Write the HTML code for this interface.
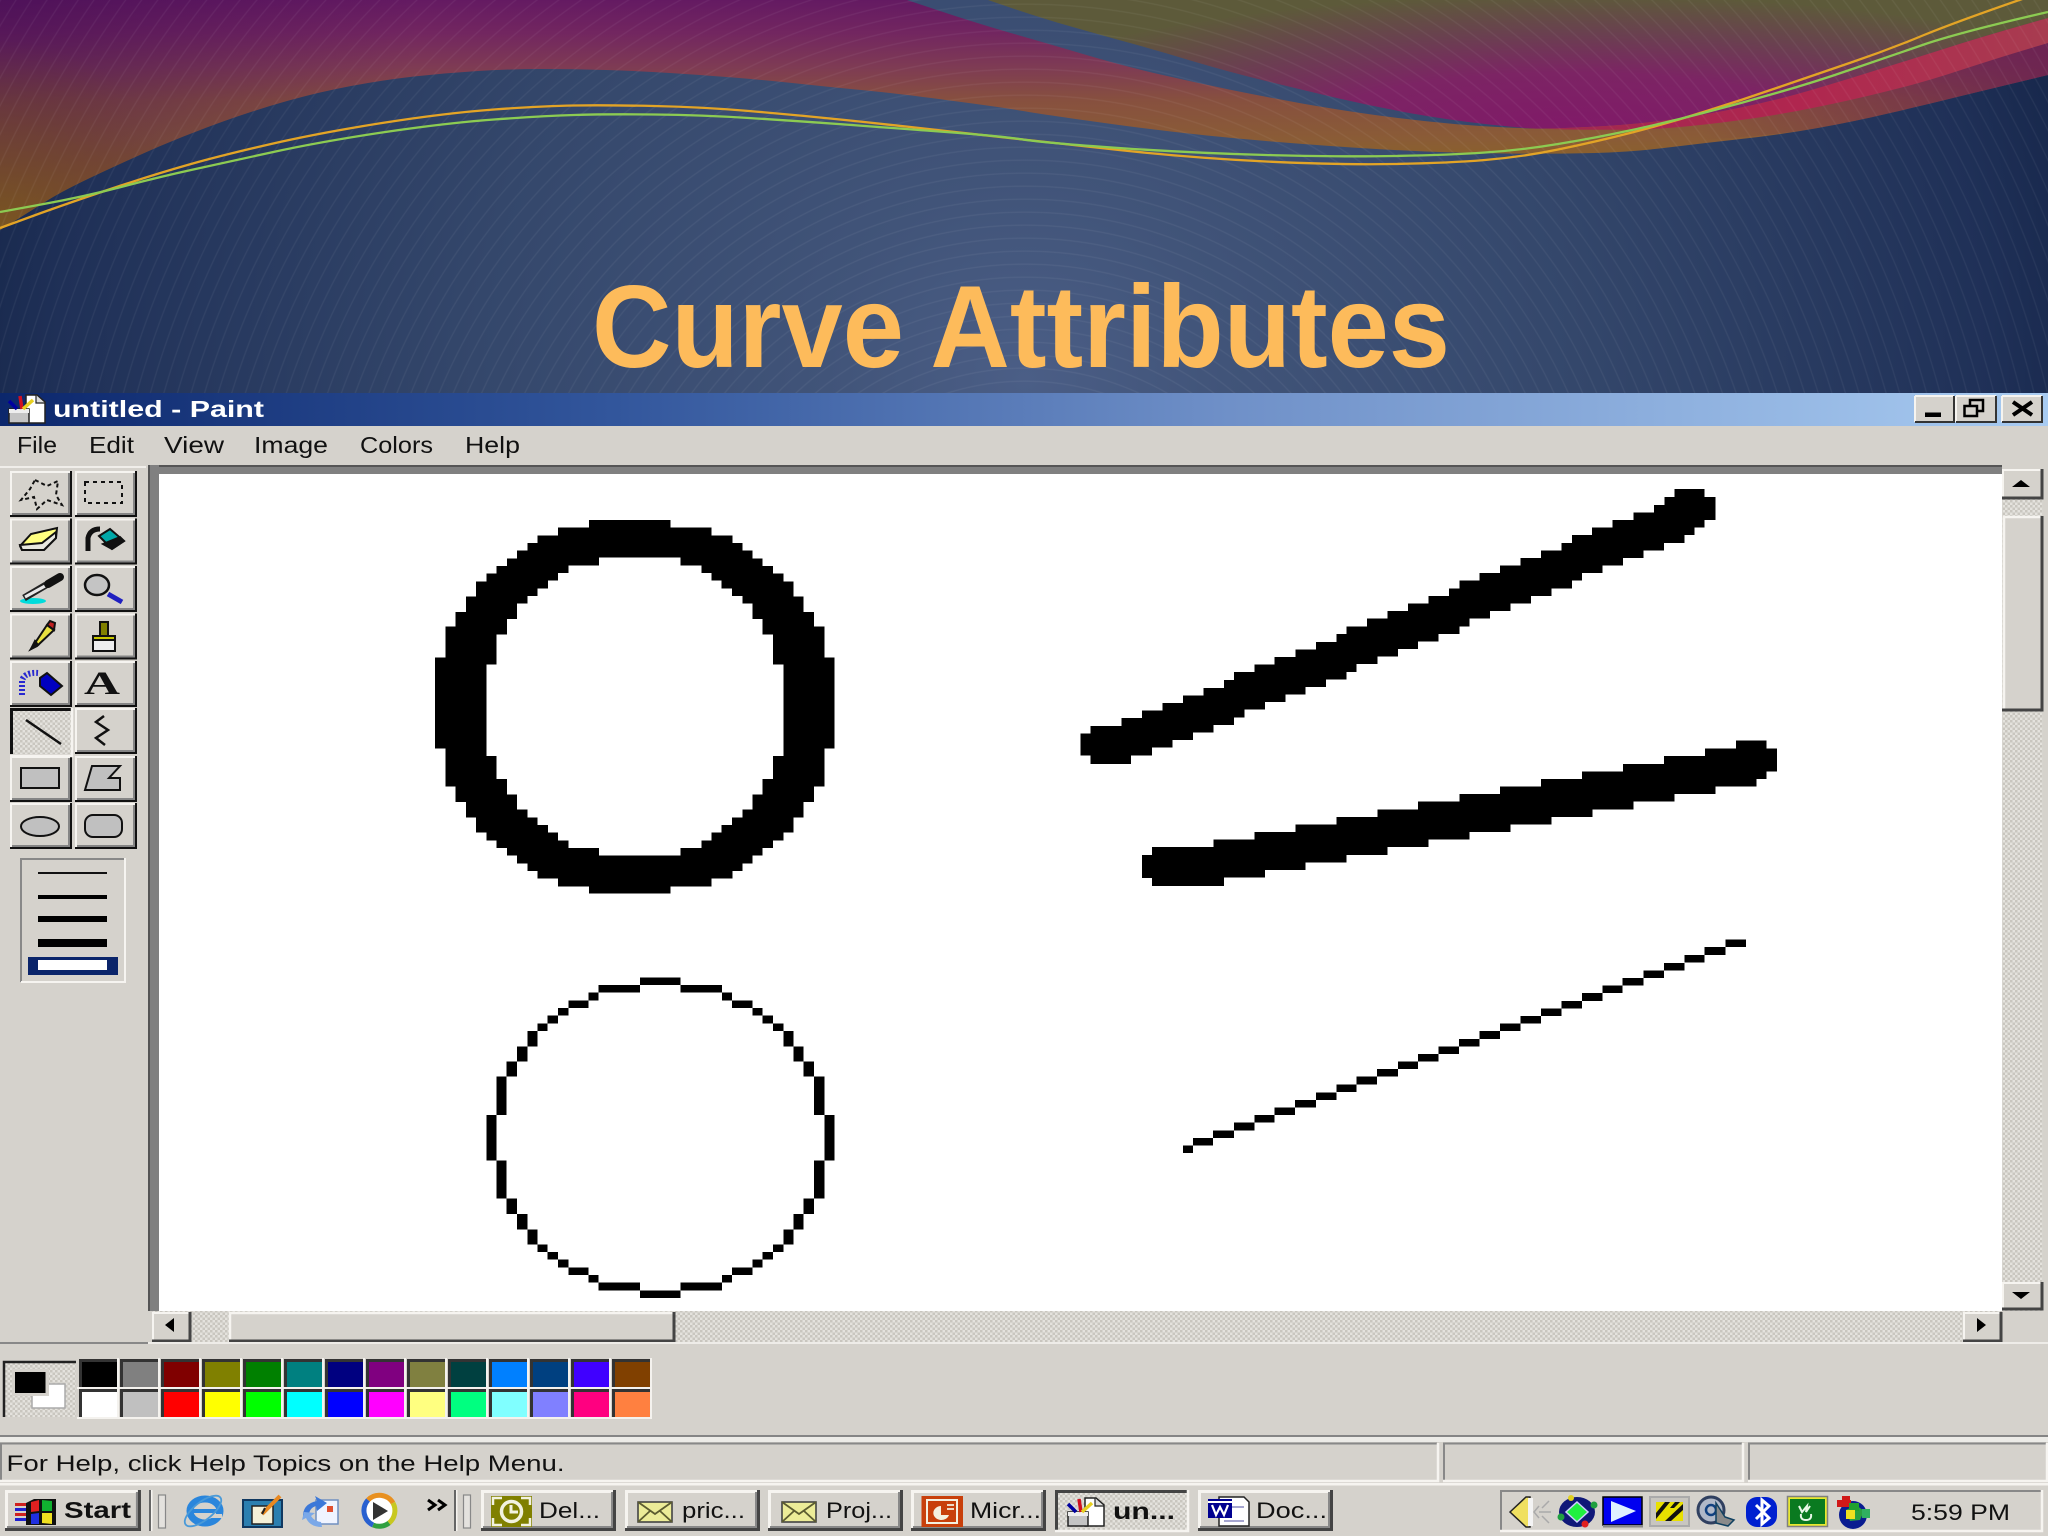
<!DOCTYPE html>
<html lang="en">
<head>
<meta charset="utf-8">
<title>Curve Attributes</title>
<style>
html,body{margin:0;padding:0;background:#d5d2cc;width:2048px;height:1536px;overflow:hidden}
svg{display:block;position:absolute;left:0;top:0}
text{font-family:"Liberation Sans",sans-serif;fill:#111}
.m{font-size:23px}
.t{font-size:22px}
</style>
</head>
<body>
<svg width="2048" height="1536" viewBox="0 0 2048 1536" xmlns="http://www.w3.org/2000/svg">
<defs>
<radialGradient id="bg" gradientUnits="userSpaceOnUse" cx="1025" cy="380" r="1100">
<stop offset="0" stop-color="#4b5e86"/><stop offset=".18" stop-color="#415479"/><stop offset=".5" stop-color="#34476b"/><stop offset=".88" stop-color="#1f3057"/><stop offset="1" stop-color="#152548"/>
</radialGradient>
<radialGradient id="arcs" gradientUnits="userSpaceOnUse" cx="1025" cy="640" r="13" spreadMethod="repeat">
<stop offset="0" stop-color="#fff" stop-opacity="0"/><stop offset=".82" stop-color="#fff" stop-opacity="0"/><stop offset=".91" stop-color="#fff" stop-opacity=".06"/><stop offset="1" stop-color="#fff" stop-opacity="0"/>
</radialGradient>
<linearGradient id="band" gradientUnits="userSpaceOnUse" x1="0" y1="0" x2="0" y2="200">
<stop offset="0" stop-color="#641a62"/><stop offset=".165" stop-color="#722660"/><stop offset=".335" stop-color="#7e3b54"/><stop offset=".5" stop-color="#87503f"/><stop offset=".7" stop-color="#8a5c36"/><stop offset="1" stop-color="#8a6c14"/>
</linearGradient>
<radialGradient id="tl" gradientUnits="userSpaceOnUse" cx="0" cy="0" r="420">
<stop offset="0" stop-color="#3c0a52" stop-opacity=".55"/><stop offset="1" stop-color="#3c0a52" stop-opacity="0"/>
</radialGradient>
<radialGradient id="gold" gradientUnits="userSpaceOnUse" cx="0" cy="230" r="190">
<stop offset="0" stop-color="#8f7010" stop-opacity="1"/><stop offset=".55" stop-color="#8a5f22" stop-opacity=".75"/><stop offset="1" stop-color="#85502f" stop-opacity="0"/>
</radialGradient>
<linearGradient id="bandr" gradientUnits="userSpaceOnUse" x1="1700" y1="0" x2="2048" y2="0">
<stop offset="0" stop-color="#6a2450" stop-opacity="0"/><stop offset="1" stop-color="#6a2050" stop-opacity=".8"/>
</linearGradient>
<radialGradient id="tr" gradientUnits="userSpaceOnUse" cx="0" cy="0" r="1" gradientTransform="translate(1570,125) scale(620,130)">
<stop offset="0" stop-color="#801a68"/><stop offset=".4" stop-color="#7c2464"/><stop offset=".7" stop-color="#6a4050"/><stop offset="1" stop-color="#5d5a3a"/>
</radialGradient>
<linearGradient id="red" gradientUnits="userSpaceOnUse" x1="1544" y1="0" x2="2048" y2="0">
<stop offset="0" stop-color="#a02850"/><stop offset=".5" stop-color="#b0264f"/><stop offset="1" stop-color="#a83c50"/>
</linearGradient>
<linearGradient id="title" x1="0" y1="0" x2="1" y2="0">
<stop offset="0" stop-color="#0c276c"/><stop offset=".3" stop-color="#32569c"/><stop offset=".6" stop-color="#6f90c8"/><stop offset="1" stop-color="#a8cbf1"/>
</linearGradient>
<pattern id="dith" width="5" height="5" patternUnits="userSpaceOnUse">
<rect width="5" height="5" fill="#e4e2dd"/><rect width="2.5" height="2.5" fill="#c9c6bf"/><rect x="2.5" y="2.5" width="2.5" height="2.5" fill="#c9c6bf"/>
</pattern>
<g id="tb">
<rect width="62" height="46" fill="#d5d2cc"/>
<rect width="62" height="2" fill="#f6f4f0"/><rect width="2" height="46" fill="#f6f4f0"/>
<rect x="58" y="2" width="2" height="42" fill="#858585"/><rect x="2" y="42" width="58" height="2" fill="#858585"/>
<rect x="60" width="2" height="46" fill="#111"/><rect y="44" width="62" height="2" fill="#111"/>
</g>
<g id="bb">
<rect width="135" height="41" fill="#d5d2cc"/>
<rect width="135" height="3" fill="#f6f4f0"/><rect width="3" height="41" fill="#f6f4f0"/>
<rect x="130" y="2" width="2" height="37" fill="#888"/><rect x="2" y="36" width="130" height="2" fill="#888"/>
<rect x="132" width="3" height="41" fill="#444"/><rect y="38" width="135" height="3" fill="#444"/>
</g>
<g id="sw">
<rect width="37" height="27"/>
<rect x="-1" y="-1" width="39" height="3" fill="#333"/><rect x="-1" y="-1" width="3" height="29" fill="#333"/>
<rect x="-3" y="27" width="42" height="2" fill="#f4f2ee"/><rect x="37" y="-2" width="2" height="31" fill="#f4f2ee"/>
</g>
<g id="paint">
<path d="M20 1h11l8 7v21H20z" fill="#fff" stroke="#222" stroke-width="1.5"/>
<path d="M30 1v8h9" fill="#ddd" stroke="#222" stroke-width="1.2"/>
<rect x="3" y="15" width="20" height="14" fill="#c4c4c4" stroke="#222" stroke-width="1.5"/>
<rect x="3" y="15" width="20" height="4" fill="#eee"/>
<path d="M3 7l8 8" stroke="#0000a0" stroke-width="3.5"/>
<path d="M14 2l2 13" stroke="#d01020" stroke-width="3.5"/>
<path d="M27 6L17 15" stroke="#e8d020" stroke-width="3.5"/>
</g>
<g id="env">
<rect x="1" y="1" width="34" height="20" fill="#ecec98" stroke="#444" stroke-width="1.6"/>
<path d="M1 1l17 12L35 1M1 21l12-11M35 21L23 10" fill="none" stroke="#5c5c30" stroke-width="1.8"/>
</g>
</defs>

<!-- slide background -->
<rect width="2048" height="395" fill="url(#bg)"/>
<path d="M0 230L16 220Q32 210 48 200Q64 190 96 175Q128 160 159 146.5Q191 133 223 121.5Q255 110 287 101Q319 92 351 86Q383 80 414 76.5Q446 73 478 71Q510 69 542 69Q574 69 606 70Q638 71 670 73Q702 75 733 77.5Q765 80 797 83.5Q829 87 861 90Q893 93 946 100Q1000 107 1023 111Q1046 115 1119 125Q1193 135 1266 141Q1339 147 1394 150Q1449 153 1504 153.5Q1559 154 1595 153Q1632 152 1668 147.5Q1705 143 1741 139Q1778 135 1815 128.5Q1852 122 1888 113.5Q1925 105 1961 96Q1998 87 2048 75V0H0Z" fill="url(#band)"/>
<path d="M0 230L16 220Q32 210 48 200Q64 190 96 175Q128 160 159 146.5Q191 133 223 121.5Q255 110 287 101Q319 92 351 86Q383 80 414 76.5V0H0Z" fill="url(#gold)"/>
<path d="M0 230L16 220Q32 210 48 200Q64 190 96 175Q128 160 159 146.5Q191 133 223 121.5Q255 110 287 101Q319 92 351 86Q383 80 414 76.5V0H0Z" fill="url(#tl)"/>
<path d="M1700 140Q1778 135 1815 128.5Q1852 122 1888 113.5Q1925 105 1961 96Q1998 87 2048 75V0H1700Z" fill="url(#bandr)"/>
<path d="M907 0L940 11Q973 22 1009 32.5Q1046 43 1083 54Q1120 65 1156 73.5Q1193 82 1229 89.5Q1266 97 1302 103.5Q1339 110 1375 115Q1412 120 1449 123.5Q1486 127 1533 128.5V0Z" fill="url(#bg)"/>
<path d="M988 0L1010 7.5Q1032 15 1057 22.5Q1083 30 1119 40Q1156 50 1192 61Q1229 72 1266 81Q1303 90 1339 98.5Q1376 107 1412 113.5Q1449 120 1485 124Q1522 128 1533 128.5Q1544 129 1588 127Q1632 125 1668 120Q1705 115 1741 107.5Q1778 100 1815 89Q1852 78 1888 66.5Q1925 55 1961 43.5Q1998 32 2048 18V0H988Z" fill="url(#tr)"/>
<path d="M1544 129L1588 127Q1632 125 1668 120Q1705 115 1741 107.5Q1778 100 1815 89Q1852 78 1888 66.5Q1925 55 1961 43.5Q1998 32 2048 18V43L2023 50.5Q1998 58 1961 70Q1925 82 1888 91Q1852 100 1815 107.5Q1778 115 1741 120Q1705 125 1668 128Q1632 131 1544 129Z" fill="url(#red)"/>
<rect width="2048" height="395" fill="url(#arcs)"/>
<g fill="none" stroke-width="2.3">
<path d="M0 228L41 213Q83 198 121 185.5Q159 173 191 164Q223 155 271 144Q319 133 382 123Q446 113 494 109.5Q542 106 574 105.5Q606 105 654 106Q702 107 749 111Q797 115 845 120Q893 125 946 131Q1000 137 1023 139.5Q1046 142 1119 150Q1193 158 1266 161.5Q1339 165 1394 164Q1449 163 1485 160Q1522 157 1558 149.5Q1595 142 1632 132.5Q1669 123 1705 111.5Q1742 100 1778 87.5Q1815 75 1851 62.5Q1888 50 1924 35Q1961 20 2031 -4" stroke="#e3a426"/>
<path d="M0 212L41 204.5Q83 197 121 187Q159 177 191 170Q223 163 271 152.5Q319 142 382 132.5Q446 123 494 119.500Q542 116 574 115Q606 114 654 114.500Q702 115 749 118Q797 121 845 124.500Q893 128 946 132Q1000 136 1023 139.500Q1046 143 1119 148Q1193 153 1266 155Q1339 157 1394 156Q1449 155 1485 152.500Q1522 150 1558 144Q1595 138 1632 130Q1669 122 1705 112.500Q1742 103 1778 92.500Q1815 82 1851 69.500Q1888 57 1924 44.500Q1961 32 2048 12" stroke="#8ccb52"/>
</g>
<text x="592" y="367" font-size="117" font-weight="700" textLength="858" lengthAdjust="spacingAndGlyphs" style="fill:#fdbb5b">Curve Attributes</text>

<!-- window -->
<rect y="393" width="2048" height="1143" fill="#d5d2cc"/>
<rect y="393" width="2048" height="33" fill="url(#title)"/>
<use href="#paint" transform="translate(6,394)"/>
<text x="53" y="417" font-size="23" font-weight="700" textLength="211" lengthAdjust="spacingAndGlyphs" style="fill:#fff">untitled - Paint</text>

<!-- caption buttons -->
<g>
<rect x="1915" y="396" width="39" height="26" fill="#d5d2cc"/><path d="M1915 396h39M1915 396v26" stroke="#f6f4f0" stroke-width="2" fill="none"/><path d="M1954 396v26H1915" stroke="#333" stroke-width="2" fill="none"/>
<rect x="1925" y="412.500" width="16" height="4.500" fill="#000"/>
<rect x="1956" y="396" width="40" height="26" fill="#d5d2cc"/><path d="M1956 396h40M1956 396v26" stroke="#f6f4f0" stroke-width="2" fill="none"/><path d="M1996 396v26H1956" stroke="#333" stroke-width="2" fill="none"/>
<path d="M1970 405v-5h13v11h-6" fill="none" stroke="#000" stroke-width="2.500"/><rect x="1964.500" y="406" width="12.500" height="10" fill="#d5d2cc" stroke="#000" stroke-width="2.500"/>
<rect x="2002" y="396" width="40" height="26" fill="#d5d2cc"/><path d="M2002 396h40M2002 396v26" stroke="#f6f4f0" stroke-width="2" fill="none"/><path d="M2042 396v26H2002" stroke="#333" stroke-width="2" fill="none"/>
<path d="M2013 402l19 13M2032 402l-19 13" stroke="#000" stroke-width="4"/>
</g>

<!-- menu -->
<text class="m" x="17" y="453" textLength="40" lengthAdjust="spacingAndGlyphs">File</text>
<text class="m" x="89" y="453" textLength="45" lengthAdjust="spacingAndGlyphs">Edit</text>
<text class="m" x="164" y="453" textLength="60" lengthAdjust="spacingAndGlyphs">View</text>
<text class="m" x="254" y="453" textLength="74" lengthAdjust="spacingAndGlyphs">Image</text>
<text class="m" x="360" y="453" textLength="73" lengthAdjust="spacingAndGlyphs">Colors</text>
<text class="m" x="465" y="453" textLength="55" lengthAdjust="spacingAndGlyphs">Help</text>

<!-- canvas -->
<rect x="0" y="466" width="146" height="2" fill="#f0eeea"/>
<rect x="148" y="465" width="1854" height="9" fill="#808080"/>
<rect x="148" y="465" width="1854" height="2" fill="#555"/>
<rect x="148" y="465" width="11" height="846" fill="#808080"/>
<rect x="148" y="465" width="2" height="846" fill="#555"/>
<rect x="159" y="474" width="1843" height="837" fill="#fff"/>

<!-- big circle -->
<g transform="translate(400,480) scale(.33333)" shape-rendering="crispEdges">
<path fill="#000" d="M567 120H812V143H567ZM474 143H935V166H474ZM413 166H997V189H413ZM382 189H1027V212H382ZM351 212H1058V235H351ZM321 235H1088V258H321ZM290 258H1119V281H290ZM259 281H1150V304H259ZM228 304H1181V350H228ZM198 350H1211V396H198ZM167 396H1242V440H167ZM136 440H1273V532H136ZM105 532H1304V806H105ZM136 806H1273V920H136ZM167 920H1242V966H167ZM198 966H1211V1012H198ZM228 1012H1181V1058H228ZM259 1058H1150V1081H259ZM290 1081H1119V1104H290ZM321 1104H1088V1127H321ZM351 1127H1058V1150H351ZM382 1150H1027V1173H382ZM413 1173H997V1196H413ZM474 1196H935V1219H474ZM567 1219H812V1241H567Z"/>
<path fill="#fff" d="M597 233H842V256H597ZM505 256H904V279H505ZM474 279H935V302H474ZM444 302H965V325H444ZM413 325H996V348H413ZM382 348H1027V371H382ZM351 371H1058V417H351ZM321 417H1088V463H321ZM290 463H1119V554H290ZM259 554H1150V828H259ZM290 828H1119V897H290ZM321 897H1088V943H321ZM351 943H1058V989H351ZM382 989H1027V1012H382ZM413 1012H996V1035H413ZM444 1035H965V1058H444ZM474 1058H935V1081H474ZM505 1081H904V1104H505ZM597 1104H842V1127H597Z"/>
</g>

<!-- small circle -->
<g transform="translate(460,960) scale(.33333)" shape-rendering="crispEdges">
<path fill="#000" d="M540 52H662V75H540ZM416 75H540V98H416ZM662 75H786V98H662ZM386 98H416V121H386ZM786 98H816V121H786ZM325 121H386V144H325ZM816 121H878V144H816ZM294 144H325V167H294ZM878 144H908V167H878ZM263 167H294V190H263ZM908 167H939V190H908ZM233 190H263V213H233ZM939 190H970V213H939ZM202 213H233V259H202ZM970 213H1001V259H970ZM171 259H202V305H171ZM1001 259H1031V305H1001ZM140 305H171V350H140ZM1031 305H1062V350H1031ZM110 350H140V465H110ZM1062 350H1093V465H1062ZM79 465H110V601H79ZM1093 465H1124V601H1093ZM110 601H140V716H110ZM1062 601H1093V716H1062ZM140 716H171V762H140ZM1031 716H1062V762H1031ZM171 762H202V808H171ZM1001 762H1031V808H1001ZM202 808H233V853H202ZM970 808H1001V853H970ZM233 853H263V876H233ZM939 853H970V876H939ZM263 876H294V899H263ZM908 876H939V899H908ZM294 899H325V922H294ZM878 899H908V922H878ZM325 922H386V945H325ZM816 922H878V945H816ZM386 945H416V968H386ZM786 945H816V968H786ZM416 968H540V991H416ZM662 968H786V991H662ZM540 991H662V1014H540Z"/>
</g>

<!-- lines -->
<g transform="translate(1060,470) scale(.48469,.44643)" shape-rendering="crispEdges" fill="#000">
<polygon points="42,590 63,590 63,573 127,573 127,556 169,556 169,539 211,539 211,522 254,522 254,505 296,505 296,488 338,488 338,470 359,470 359,453 401,453 401,436 443,436 443,419 486,419 486,402 528,402 528,385 570,385 570,367 591,367 591,350 633,350 633,333 676,333 676,316 718,316 718,299 760,299 760,282 803,282 803,265 824,265 824,248 866,248 866,231 908,231 908,214 950,214 950,197 992,197 992,180 1035,180 1035,163 1056,163 1056,146 1098,146 1098,129 1140,129 1140,112 1183,112 1183,95 1226,95 1226,78 1247,78 1247,60 1268,60 1268,43 1330,43 1330,60 1352,60 1352,112 1330,112 1330,129 1309,129 1309,146 1288,146 1288,163 1246,163 1246,180 1204,180 1204,197 1162,197 1162,214 1119,214 1119,231 1077,231 1077,248 1056,248 1056,265 1014,265 1014,282 972,282 972,299 929,299 929,316 887,316 887,333 845,333 845,350 824,350 824,367 781,367 781,384 739,384 739,401 697,401 697,418 655,418 655,435 612,435 612,452 591,452 591,469 549,469 549,486 507,486 507,503 465,503 465,520 423,520 423,537 381,537 381,554 359,554 359,571 317,571 317,588 274,588 274,605 232,605 232,622 190,622 190,639 147,639 147,658 63,658 63,640 42,640"/>
<polygon points="169,862 190,862 190,845 317,845 317,828 401,828 401,811 486,811 486,794 570,794 570,777 655,777 655,760 739,760 739,743 824,743 824,726 908,726 908,709 992,709 992,692 1077,692 1077,675 1162,675 1162,658 1246,658 1246,641 1331,641 1331,624 1395,624 1395,606 1458,606 1458,624 1479,624 1479,675 1458,675 1458,692 1437,692 1437,709 1352,709 1352,726 1268,726 1268,743 1183,743 1183,760 1099,760 1099,777 1014,777 1014,794 929,794 929,811 845,811 845,828 760,828 760,845 676,845 676,862 591,862 591,879 507,879 507,896 423,896 423,913 338,913 338,932 190,932 190,914 169,914"/>
<path d="M254 1513h20v17h-20zM274 1496h42v17h-42zM316 1479h43v17h-43zM359 1462h42v17h-42zM401 1445h42v17h-42zM443 1428h42v17h-42zM485 1411h43v17h-43zM528 1394h42v17h-42zM570 1376h42v17h-42zM612 1359h42v17h-42zM654 1342h43v17h-43zM697 1325h42v17h-42zM739 1308h42v17h-42zM781 1291h42v17h-42zM823 1274h43v17h-43zM866 1257h42v17h-42zM908 1240h42v17h-42zM950 1223h42v17h-42zM992 1206h43v17h-43zM1035 1189h42v17h-42zM1077 1172h42v17h-42zM1119 1155h42v17h-42zM1161 1138h43v17h-43zM1204 1121h42v17h-42zM1246 1104h42v17h-42zM1288 1086h42v17h-42zM1330 1069h43v17h-43zM1373 1052h42v17h-42z"/>
</g>

<!-- vertical scrollbar -->
<rect x="2002" y="469" width="41" height="842" fill="url(#dith)"/>
<rect x="2002" y="469" width="41" height="29" fill="#d5d2cc"/>
<path d="M2003 498v-28h39" stroke="#f6f4f0" stroke-width="2" fill="none"/><path d="M2042 469v29h-40" stroke="#444" stroke-width="3" fill="none"/>
<path d="M2012 487l9-7 9 7z" fill="#000"/>
<rect x="2003" y="516" width="40" height="194" fill="#d5d2cc"/>
<path d="M2004 710V517h38" stroke="#f6f4f0" stroke-width="2.500" fill="none"/><path d="M2042 516v194h-40" stroke="#444" stroke-width="3" fill="none"/>
<rect x="2002" y="1282" width="41" height="27" fill="#d5d2cc"/>
<path d="M2003 1309v-26h39" stroke="#f6f4f0" stroke-width="2" fill="none"/><path d="M2042 1282v27h-40" stroke="#444" stroke-width="3" fill="none"/>
<path d="M2012 1292l9 7 9-7z" fill="#000"/>

<!-- horizontal scrollbar -->
<rect x="152" y="1311" width="1850" height="31" fill="url(#dith)"/>
<rect x="152" y="1312" width="39" height="30" fill="#d5d2cc"/>
<path d="M153 1342v-29h37" stroke="#f6f4f0" stroke-width="2" fill="none"/><path d="M190 1312v29h-38" stroke="#444" stroke-width="3" fill="none"/>
<path d="M174 1318v14l-9-7z" fill="#000"/>
<rect x="229" y="1312" width="445" height="30" fill="#d5d2cc"/>
<path d="M230 1342v-29h443" stroke="#f6f4f0" stroke-width="2.500" fill="none"/><path d="M674 1312v29H229" stroke="#444" stroke-width="3" fill="none"/>
<rect x="1963" y="1312" width="39" height="30" fill="#d5d2cc"/>
<path d="M1964 1342v-29h37" stroke="#f6f4f0" stroke-width="2" fill="none"/><path d="M2001 1312v29h-38" stroke="#444" stroke-width="3" fill="none"/>
<path d="M1977 1318v14l9-7z" fill="#000"/>
<rect x="0" y="1342" width="148" height="2" fill="#888"/>
<rect x="148" y="1342" width="1900" height="2" fill="#eeece8"/>

<!-- tool buttons -->
<use href="#tb" x="10" y="471"/><use href="#tb" x="75" y="471"/>
<use href="#tb" x="10" y="518.500"/><use href="#tb" x="75" y="518.500"/>
<use href="#tb" x="10" y="566"/><use href="#tb" x="75" y="566"/>
<use href="#tb" x="10" y="613.500"/><use href="#tb" x="75" y="613.500"/>
<use href="#tb" x="10" y="661"/><use href="#tb" x="75" y="661"/>
<use href="#tb" x="75" y="708"/>
<use href="#tb" x="10" y="756"/><use href="#tb" x="75" y="756"/>
<use href="#tb" x="10" y="803"/><use href="#tb" x="75" y="803"/>
<rect x="10" y="708" width="62" height="46" fill="url(#dith)"/>
<path d="M11.500 754V709.500H72" stroke="#111" stroke-width="3" fill="none"/>
<path d="M72 708v48H10" stroke="#f6f4f0" stroke-width="2.500" fill="none"/>

<g fill="none" stroke="#111" stroke-width="2">
<polygon points="35,480 47,486 58,481 56,495 62,505 47,500 37,509 34,497 21,500 30,489" stroke-dasharray="4 3"/>
<rect x="85" y="482" width="37" height="21" stroke-dasharray="4 4"/>
<polygon points="20,546 31,534 57,528 56,538 44,550 22,550" fill="#ffff80"/>
<polygon points="20,545 42,543 56,532 56,538 44,550 22,550" fill="#e8e8e0"/>
<path d="M88 551v-13q2-9 12-9" stroke-width="5"/>
<polygon points="99,536 110,529 124,541 112,549" fill="#00a8a8"/>
<polygon points="103,544 120,537 124,541 112,549" fill="#111"/>
<ellipse cx="33" cy="601" rx="13" ry="3" fill="#00dcdc" stroke="none"/>
<path d="M24 598L46 585" stroke-width="7" stroke="#222"/>
<path d="M25 597L45 586" stroke-width="3" stroke="#e8e8e8"/>
<path d="M48 584L60 577" stroke-width="8" stroke-linecap="round"/>
<ellipse cx="97" cy="585" rx="12" ry="10" fill="#c4c4c4" stroke-width="2.500"/>
<path d="M108 594L122 602" stroke="#2020c0" stroke-width="5"/>
<polygon points="31,649 47,625 54,630 37,646" fill="#e8e040"/>
<polygon points="47,625 50,621 55,623 54,630" fill="#c02020"/>
<polygon points="31,649 35,641 38,645" fill="#111"/>
<rect x="100" y="622" width="8" height="14" fill="#808000"/>
<rect x="93" y="636" width="22" height="4" fill="#c8c800"/>
<rect x="93" y="640" width="22" height="11" fill="#eee"/>
<polygon points="40,678 47,673 62,686 51,695 40,686" fill="#0000c0"/>
<path d="M22 695V681Q24 672 38 673" stroke="#2828d0" stroke-width="6" stroke-dasharray="2 2"/>
<line x1="26" y1="720" x2="61" y2="744" stroke-width="2.500"/>
<path d="M104 716L96 722L108 730L96 738L105 745" stroke-width="2.500"/>
<rect x="21" y="768" width="38" height="20" fill="#c0c0c0"/>
<polygon points="92,766 120,766 109,778 120,778 120,790 85,790" fill="#c0c0c0"/>
<ellipse cx="40" cy="826.500" rx="19" ry="9.500" fill="#c0c0c0"/>
<rect x="85" y="815" width="37" height="22" rx="8" fill="#c0c0c0"/>
</g>
<text x="84" y="694" font-size="33" font-weight="700" textLength="36" lengthAdjust="spacingAndGlyphs" style="font-family:'Liberation Serif',serif">A</text>

<!-- line width box -->
<path d="M21 982V859h104" stroke="#888" stroke-width="2" fill="none"/><path d="M125 858v124H21" stroke="#f6f4f0" stroke-width="2" fill="none"/>
<rect x="38" y="872" width="69" height="2" fill="#111"/>
<rect x="38" y="895" width="69" height="4" fill="#000"/>
<rect x="38" y="916" width="69" height="6" fill="#000"/>
<rect x="38" y="939" width="69" height="8" fill="#000"/>
<rect x="28" y="957" width="90" height="18" fill="#0a246a"/>
<rect x="38" y="960" width="69" height="10" fill="#fff"/>

<!-- palette -->
<rect x="3.500" y="1361" width="72" height="56" fill="url(#dith)"/>
<path d="M4 1417v-55h72" stroke="#222" stroke-width="2.500" fill="none"/>
<rect x="32" y="1384" width="33" height="24" fill="#fff" stroke="#aaa" stroke-width="1.500"/>
<rect x="12" y="1369" width="37" height="27" fill="#d5d2cc"/>
<rect x="15" y="1372" width="30.500" height="21" fill="#000"/>
<use href="#sw" x="80" y="1360" fill="#000000"/><use href="#sw" x="121" y="1360" fill="#808080"/><use href="#sw" x="162" y="1360" fill="#800000"/><use href="#sw" x="203" y="1360" fill="#808000"/><use href="#sw" x="244" y="1360" fill="#008000"/><use href="#sw" x="285" y="1360" fill="#008080"/><use href="#sw" x="326" y="1360" fill="#000080"/><use href="#sw" x="367" y="1360" fill="#800080"/><use href="#sw" x="408" y="1360" fill="#808040"/><use href="#sw" x="449" y="1360" fill="#004040"/><use href="#sw" x="490" y="1360" fill="#0080ff"/><use href="#sw" x="531" y="1360" fill="#004080"/><use href="#sw" x="572" y="1360" fill="#4000ff"/><use href="#sw" x="613" y="1360" fill="#804000"/>
<use href="#sw" x="80" y="1390" fill="#ffffff"/><use href="#sw" x="121" y="1390" fill="#c0c0c0"/><use href="#sw" x="162" y="1390" fill="#ff0000"/><use href="#sw" x="203" y="1390" fill="#ffff00"/><use href="#sw" x="244" y="1390" fill="#00ff00"/><use href="#sw" x="285" y="1390" fill="#00ffff"/><use href="#sw" x="326" y="1390" fill="#0000ff"/><use href="#sw" x="367" y="1390" fill="#ff00ff"/><use href="#sw" x="408" y="1390" fill="#ffff80"/><use href="#sw" x="449" y="1390" fill="#00ff80"/><use href="#sw" x="490" y="1390" fill="#80ffff"/><use href="#sw" x="531" y="1390" fill="#8080ff"/><use href="#sw" x="572" y="1390" fill="#ff0080"/><use href="#sw" x="613" y="1390" fill="#ff8040"/>

<!-- status bar -->
<rect y="1435" width="2048" height="2" fill="#858585"/>
<rect y="1437" width="2048" height="5" fill="#ecebe7"/>
<path d="M1 1480v-36.500H1437" stroke="#888" stroke-width="2" fill="none"/><path d="M1438 1443v38H0" stroke="#f6f4f0" stroke-width="2.500" fill="none"/>
<path d="M1444 1480v-36.500H1742" stroke="#888" stroke-width="2" fill="none"/><path d="M1743 1443v38H1443" stroke="#f6f4f0" stroke-width="2.500" fill="none"/>
<path d="M1749 1480v-36.500H2046" stroke="#888" stroke-width="2" fill="none"/><path d="M2047 1443v38H1748" stroke="#f6f4f0" stroke-width="2.500" fill="none"/>
<rect y="1483" width="2048" height="2.500" fill="#f6f4f0"/>
<text class="t" x="6.500" y="1471" textLength="558" lengthAdjust="spacingAndGlyphs">For Help, click Help Topics on the Help Menu.</text>

<!-- taskbar -->
<use href="#bb" transform="translate(5,1490) scale(1.007,1)"/>
<g>
<rect x="15" y="1503" width="11" height="3" fill="#d02020"/><rect x="15" y="1508" width="11" height="3" fill="#2020d0"/><rect x="15" y="1513" width="11" height="3" fill="#d02020"/><rect x="15" y="1518" width="11" height="3" fill="#2020d0"/>
<polygon points="26,1503 34,1499 56,1499 56,1525 26,1525" fill="#111"/>
<polygon points="31,1502 39,1500 39,1511 31,1512" fill="#e02020"/><polygon points="42,1500 52,1501 52,1511 42,1511" fill="#10b030"/>
<polygon points="31,1514 39,1513 39,1524 31,1524" fill="#2030e0"/><polygon points="42,1513 52,1513 52,1524 42,1523" fill="#f0e020"/>
</g>
<text x="64" y="1518" font-size="23" font-weight="700" textLength="67" lengthAdjust="spacingAndGlyphs">Start</text>
<rect x="149" y="1490" width="2" height="41" fill="#666"/><rect x="151" y="1490" width="1.500" height="41" fill="#f6f4f0"/>
<rect x="158.500" y="1495" width="7" height="33" fill="#e4e2de" stroke="#888" stroke-width="1.200"/>

<!-- IE -->
<g fill="none">
<ellipse cx="205" cy="1511" rx="15" ry="12" stroke="#2a86dc" stroke-width="7"/>
<rect x="190" y="1509" width="31" height="4" fill="#2a86dc"/>
<rect x="207" y="1514" width="15" height="4" fill="#d5d2cc"/>
<ellipse cx="203" cy="1511" rx="22" ry="9" stroke="#4a9ad8" stroke-width="1.800" transform="rotate(-38 203 1511)"/>
</g>
<!-- outlook-like -->
<g>
<rect x="243" y="1500" width="39" height="27" fill="#2b7fb0" stroke="#103860" stroke-width="2"/>
<rect x="252" y="1506" width="21" height="18" fill="#f4f0d8" stroke="#222" stroke-width="1.500"/>
<path d="M262 1514L280 1496" stroke="#e88820" stroke-width="4"/>
<path d="M262 1514l3-6" stroke="#222" stroke-width="2"/>
</g>
<!-- sync -->
<g>
<rect x="316" y="1500" width="22" height="24" fill="#f0f4ff" stroke="#7090c0" stroke-width="1.500"/>
<path d="M303 1518q-1-14 14-17l-2-5 12 7-10 8-1-5q-7 2-7 10z" fill="#3c78d8"/>
<path d="M322 1527q-12 0-16-9l-4 2 2-8 11 1-4 3q3 5 10 6z" fill="#7aa8e8"/>
<rect x="327" y="1506" width="6" height="6" fill="#e05030"/>
</g>
<!-- media player -->
<g>
<circle cx="379" cy="1511" r="15" fill="#fff"/>
<path d="M368 1500a16 16 0 0 1 25 3" fill="none" stroke="#e89020" stroke-width="5"/>
<path d="M393 1503a16 16 0 0 1-4 20" fill="none" stroke="#c8c820" stroke-width="5"/>
<path d="M389 1523a16 16 0 0 1-16 2" fill="none" stroke="#30a040" stroke-width="5"/>
<path d="M373 1525a16 16 0 0 1-5-25" fill="none" stroke="#2860d0" stroke-width="5"/>
<path d="M373 1502l15 9-15 9z" fill="#333"/>
</g>
<path d="M428 1500l7 5-7 5M438 1500l7 5-7 5" fill="none" stroke="#000" stroke-width="3"/>
<rect x="454" y="1490" width="2" height="41" fill="#666"/><rect x="456" y="1490" width="1.500" height="41" fill="#f6f4f0"/>
<rect x="463.500" y="1495" width="7" height="33" fill="#e4e2de" stroke="#888" stroke-width="1.200"/>

<use href="#bb" x="481" y="1490"/>
<g>
<rect x="491" y="1496" width="41" height="31" fill="#808000"/>
<circle cx="511.500" cy="1511.500" r="10" fill="#808000" stroke="#f2f2e0" stroke-width="3.500"/>
<path d="M511 1505v7h7" stroke="#f2f2e0" stroke-width="3" fill="none"/>
<path d="M493 1505v-7h9M530 1505v-7h-9M493 1518v7h9M530 1518v7h-9" stroke="#f2f2e0" stroke-width="2.500" fill="none"/>
</g>
<text class="t" x="539" y="1518" textLength="61" lengthAdjust="spacingAndGlyphs">Del...</text>

<use href="#bb" x="625" y="1490"/>
<use href="#env" x="637" y="1501"/>
<text class="t" x="682" y="1518" textLength="63" lengthAdjust="spacingAndGlyphs">pric...</text>

<use href="#bb" x="768" y="1490"/>
<use href="#env" x="781" y="1501"/>
<text class="t" x="826" y="1518" textLength="66" lengthAdjust="spacingAndGlyphs">Proj...</text>

<use href="#bb" x="911" y="1490"/>
<g>
<rect x="921.500" y="1496" width="41.500" height="31" fill="#c8400c"/>
<rect x="927" y="1500" width="30" height="23" fill="#c8400c" stroke="#f4f0e0" stroke-width="2"/>
<path d="M941 1506a8 7 0 1 0 8 9h-8z" fill="#f4f0e0"/>
<path d="M947 1505h7M947 1509h7" stroke="#f4f0e0" stroke-width="1.800"/>
</g>
<text class="t" x="970" y="1518" textLength="71" lengthAdjust="spacingAndGlyphs">Micr...</text>

<rect x="1055" y="1490" width="133" height="41" fill="url(#dith)"/>
<path d="M1056.500 1531v-39.500H1188" stroke="#444" stroke-width="3" fill="none"/>
<path d="M1188 1490v41h-133" stroke="#f6f4f0" stroke-width="2.500" fill="none"/>
<use href="#paint" transform="translate(1065,1497)"/>
<text x="1113" y="1519" font-size="23" font-weight="700" textLength="62" lengthAdjust="spacingAndGlyphs">un...</text>

<use href="#bb" x="1198" y="1490"/>
<g>
<path d="M1219 1497h25l5 5v24h-30z" fill="#fff" stroke="#222" stroke-width="1.500"/>
<path d="M1224 1507h20M1224 1521h20" stroke="#8888c0" stroke-width="1.500"/>
<rect x="1208" y="1499" width="24" height="19" fill="#000090"/>
<rect x="1208" y="1501" width="24" height="2" fill="#fff"/>
<path d="M1212 1505l4 10 4-8 4 8 4-10" fill="none" stroke="#fff" stroke-width="2.200"/>
</g>
<text class="t" x="1256" y="1518" textLength="71" lengthAdjust="spacingAndGlyphs">Doc...</text>

<!-- tray -->
<path d="M1501 1531v-40h540" stroke="#888" stroke-width="2" fill="none"/><path d="M2042 1490v41h-542" stroke="#f6f4f0" stroke-width="2.500" fill="none"/>
<g>
<polygon points="1510,1512 1526,1497 1530,1497 1530,1527 1526,1527" fill="#f0e060" stroke="#222" stroke-width="1.500"/>
<rect x="1528" y="1498" width="5" height="28" fill="#f4f4f4"/>
<path d="M1539 1506l-5 6 5 6M1551 1512h-12M1549 1501l-7 7M1549 1523l-7-7" stroke="#aaa" stroke-width="1.500" fill="none"/>
<ellipse cx="1577" cy="1512" rx="18" ry="15" fill="#101878"/>
<polygon points="1577,1502 1588,1512 1577,1522 1566,1512" fill="#20f040" stroke="#cfd0ff" stroke-width="1.500"/>
<circle cx="1594" cy="1505" r="3.500" fill="#20a040"/><circle cx="1561" cy="1517" r="3.500" fill="#20a040"/><circle cx="1585" cy="1524" r="3.500" fill="#e02020"/><circle cx="1571" cy="1498" r="3" fill="#e0d020"/>
<rect x="1603" y="1497" width="39" height="28" fill="#0000f0" stroke="#000" stroke-width="1.500"/>
<rect x="1603" y="1525" width="40" height="2.500" fill="#888"/>
<polygon points="1611,1501 1636,1511 1611,1522" fill="#dff0ff"/>
<rect x="1650" y="1497" width="39" height="29" fill="#c8c6c0" stroke="#aaa" stroke-width="2"/>
<rect x="1656" y="1502" width="27" height="19" fill="#e8e000"/>
<path d="M1656 1513l9-11h5l-14 17zM1665 1521l18-17v6l-12 11zM1675 1502h5l-6 6h-4z" fill="#111"/>
<circle cx="1711" cy="1510" r="13" fill="#b0b8c8" stroke="#304060" stroke-width="3"/>
<circle cx="1711" cy="1510" r="5" fill="none" stroke="#104080" stroke-width="2.500"/>
<path d="M1716 1503l9 14 9 3-6 6-12-3z" fill="#8a8a8a" stroke="#104060" stroke-width="1.500"/>
<rect x="1746" y="1497" width="31" height="30" rx="11" fill="#0020d0"/>
<path d="M1756 1505l13 13-7 6v-24l7 6-13 13" fill="none" stroke="#fff" stroke-width="3"/>
<rect x="1789" y="1498" width="37" height="27" fill="#0a7a20" stroke="#e8e830" stroke-width="2"/>
<rect x="1787.500" y="1496.500" width="40" height="30" fill="none" stroke="#808080" stroke-width="1.500"/>
<path d="M1799 1506l3 6 5-6-1 6 4-6M1801 1514q-1 6 5 6t5-6" fill="none" stroke="#e8f8e8" stroke-width="2"/>
<circle cx="1853" cy="1515" r="14" fill="#0a1c90"/>
<path d="M1846 1510l10-5 8 6-4 9-10 1z" fill="#28a040"/>
<rect x="1837" y="1500" width="14" height="7" fill="#d01818"/><rect x="1842" y="1496" width="8" height="6" fill="#d01818"/>
<rect x="1849" y="1503" width="10" height="8" fill="#20a030"/>
<rect x="1846" y="1510" width="9" height="9" fill="#f0e020"/>
<rect x="1862" y="1509" width="8" height="9" fill="#30b060"/>
</g>
<text class="t" x="1911" y="1520" textLength="99" lengthAdjust="spacingAndGlyphs">5:59 PM</text>
</svg>
</body>
</html>
